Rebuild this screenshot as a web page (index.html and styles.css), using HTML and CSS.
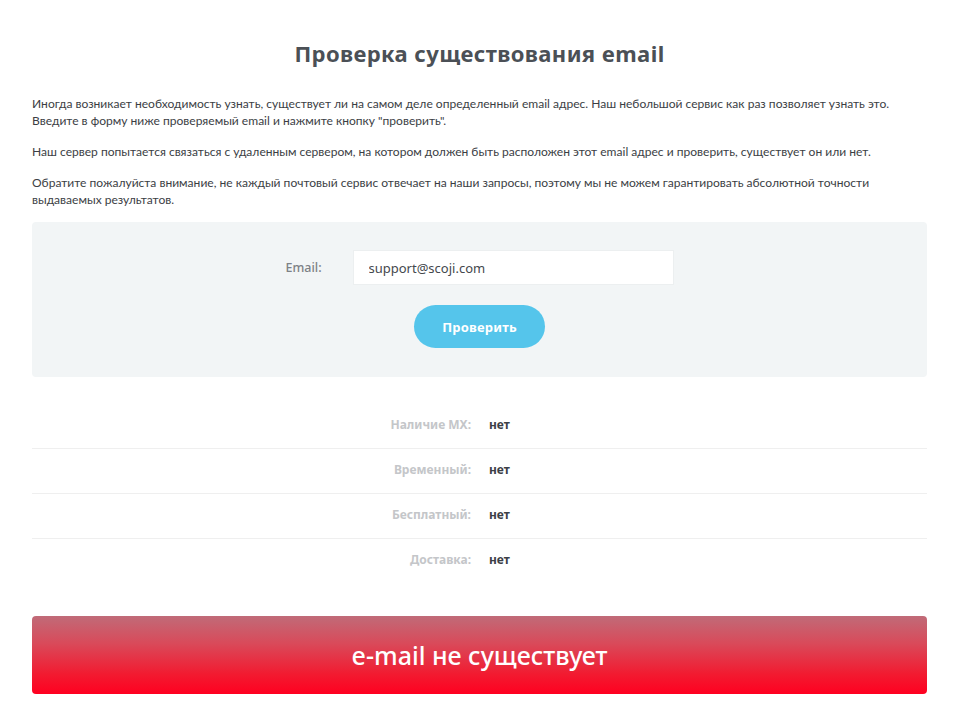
FILE: index.html
```html
<!DOCTYPE html>
<html lang="ru">
<head>
<meta charset="utf-8">
<title>Проверка существования email</title>
<link rel="stylesheet" href="styles.css">
</head>
<body>
<main class="page">
  <h1 class="title">Проверка существования email</h1>
  <div class="intro">
    <p>Иногда возникает необходимость узнать, существует ли на самом деле определенный email адрес. Наш небольшой сервис как раз позволяет узнать это.<br>Введите в форму ниже проверяемый email и нажмите кнопку "проверить".</p>
    <p>Наш сервер попытается связаться с удаленным сервером, на котором должен быть расположен этот email адрес и проверить, существует он или нет.</p>
    <p>Обратите пожалуйста внимание, не каждый почтовый сервис отвечает на наши запросы, поэтому мы не можем гарантировать абсолютной точности выдаваемых результатов.</p>
  </div>
  <form class="check-form">
    <div class="field">
      <label class="field-label" for="email">Email:</label>
      <input class="field-input" id="email" type="text" value="support@scoji.com">
    </div>
    <button class="btn" type="button">Проверить</button>
  </form>
  <div class="results">
    <div class="row"><span class="row-label">Наличие MX:</span><span class="row-value">нет</span></div>
    <div class="row"><span class="row-label">Временный:</span><span class="row-value">нет</span></div>
    <div class="row"><span class="row-label">Бесплатный:</span><span class="row-value">нет</span></div>
    <div class="row"><span class="row-label">Доставка:</span><span class="row-value">нет</span></div>
  </div>
  <div class="verdict">e-mail не существует</div>
</main>
</body>
</html>
```
FILE: styles.css
```css
* { box-sizing: border-box; }
html, body { margin: 0; padding: 0; background: #fff; }
body {
  font-family: "Lato", "Open Sans", sans-serif;
  color: #3a3d42;
}
.page {
  width: 895px;
  margin: 0 0 0 32px;
  padding-top: 39px;
}
.title {
  margin: 0;
  text-align: center;
  font-family: "Noto Sans", "Open Sans", sans-serif;
  font-weight: 700;
  font-size: 22px;
  line-height: 28px;
  color: #4b5056;
  letter-spacing: 0.4px;
}
.intro {
  margin-top: 28px;
  font-size: 12.05px;
  line-height: 17px;
  color: #3b3e44;
}
.intro p { margin: 0 0 14px; }
.check-form {
  margin-top: 0;
  background: #f2f5f6;
  border-radius: 4px;
  height: 155px;
  padding-top: 28px;
  display: flex;
  flex-direction: column;
  align-items: center;
}
.field {
  display: flex;
  align-items: center;
}
.field-label {
  width: 67px;
  font-family: "Noto Sans", sans-serif;
  font-size: 12.5px;
  font-weight: 500;
  color: #7d8186;
}
.field-input {
  width: 321px;
  height: 35px;
  border: 1px solid #eceff0;
  background: #fff;
  padding: 0 15px;
  font-family: "Noto Sans", sans-serif;
  font-size: 13px;
  color: #44484d;
  outline: none;
}
.btn {
  margin-top: 20px;
  width: 131px;
  height: 43px;
  border: 0;
  border-radius: 22px;
  background: #55c5eb;
  color: #fff;
  font-family: "Noto Sans", sans-serif;
  font-weight: 700;
  font-size: 13px;
  letter-spacing: 0.2px;
}
.results { margin-top: 27px; }
.row {
  display: flex;
  align-items: center;
  height: 45px;
  padding-bottom: 4px;
  border-bottom: 1px solid #efefef;
}
.row:last-child { border-bottom: 0; }
.row-label {
  width: 439px;
  text-align: right;
  font-family: "Noto Sans", sans-serif;
  font-weight: 700;
  font-size: 12px;
  color: #c4c6c9;
}
.row-value {
  margin-left: 18px;
  font-family: "Noto Sans", sans-serif;
  font-weight: 700;
  font-size: 12px;
  color: #3c4046;
}
.verdict {
  margin-top: 32px;
  height: 78px;
  border-radius: 4px;
  background: linear-gradient(to bottom, #c06b78 0%, #d94a5a 35%, #f21a30 75%, #ff0020 100%);
  color: #fff;
  display: flex;
  align-items: center;
  justify-content: center;
  font-family: "Noto Sans", sans-serif;
  font-weight: 500;
  font-size: 25px;
}
```
